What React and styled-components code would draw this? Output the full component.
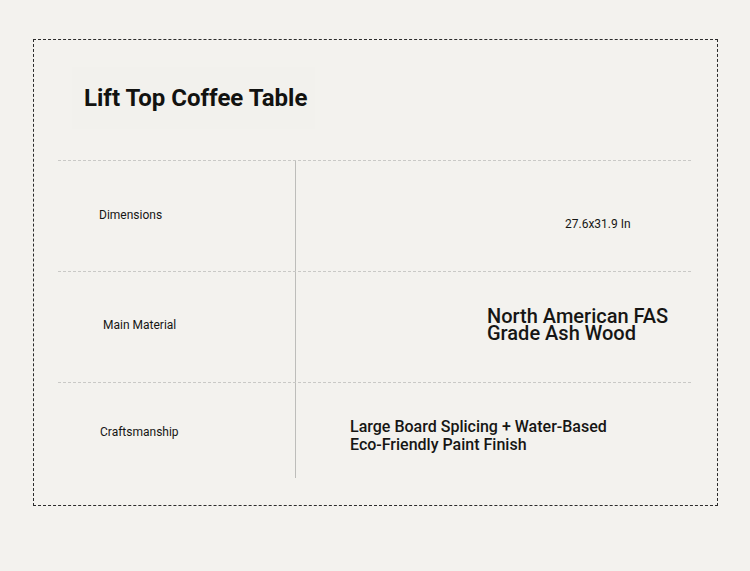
import React from 'react';
import styled, { createGlobalStyle } from 'styled-components';

const Global = createGlobalStyle`
  html, body {
    margin: 0;
    padding: 0;
    background: #f3f2ee;
  }
  body {
    font-family: Roboto, "Liberation Sans", sans-serif;
    color: #161616;
  }
`;

const specs = [
  { id: 1, label: 'Dimensions', value: '27.6x31.9 In', height: 111, labelPl: 41, labelDy: -1, valuePl: 269, valueDy: 8, size: 12, lh: 16, weight: 400 },
  { id: 2, label: 'Main Material', value: ['North American FAS', 'Grade Ash Wood'], height: 111, labelPl: 45, labelDy: -2, valuePl: 191, valueDy: -2, size: 20, lh: 17, weight: 500 },
  { id: 3, label: 'Craftsmanship', value: ['Large Board Splicing + Water-Based', 'Eco-Friendly Paint Finish'], height: 96, labelPl: 42, labelDy: 1, valuePl: 54, valueDy: 5, size: 16, lh: 18, weight: 500 },
];

const App = () => {
  return (
    <>
      <Global />
      <Card>
        <TitleWrap>
          <Title>Lift Top Coffee Table</Title>
        </TitleWrap>
        <Table>
          {specs.map(item => <SpecRow key={item.id} {...item} />)}
        </Table>
      </Card>
    </>
  );
};

const SpecRow = ({ label, value, height, labelPl, labelDy, valuePl, valueDy, size, lh, weight }) => {
  const lines = Array.isArray(value) ? value : [value];
  return (
    <Row $height={height}>
      <LabelCell $pl={labelPl} $dy={labelDy}>
        <Label>{label}</Label>
      </LabelCell>
      <ValueCell $pl={valuePl} $dy={valueDy}>
        <Value $size={size} $lh={lh} $weight={weight}>
          {lines.map((line, i) => <span key={i}>{line}</span>)}
        </Value>
      </ValueCell>
    </Row>
  );
};

const Card = styled.section`
  box-sizing: border-box;
  width: 685px;
  height: 467px;
  margin: 39px 0 0 33px;
  border: 1px dashed #2b2b2b;
`;

const TitleWrap = styled.div`
  display: flex;
  align-items: center;
  width: 243px;
  height: 62px;
  margin: 27px 0 0 38px;
  padding: 0 12px;
  box-sizing: border-box;
  background: rgba(0, 0, 0, 0.004);
`;

const Title = styled.h1`
  margin: 0;
  font-size: 24px;
  font-weight: 700;
  color: #121210;
  white-space: nowrap;
`;

const Table = styled.div`
  width: 633px;
  margin: 31px 0 0 24px;
`;

const Row = styled.div`
  box-sizing: border-box;
  display: grid;
  grid-template-columns: 238px 1fr;
  height: ${p => p.$height}px;
  border-top: 1px dashed #c9c9c6;
`;

const shift = dy => (dy >= 0 ? `padding-top: ${dy * 2}px;` : `padding-bottom: ${-dy * 2}px;`);

const LabelCell = styled.div`
  box-sizing: border-box;
  display: flex;
  align-items: center;
  padding-left: ${p => p.$pl}px;
  ${p => shift(p.$dy)}
  border-right: 1px solid #bdbdba;
`;

const Label = styled.span`
  font-size: 12px;
  font-weight: 400;
  color: #161614;
`;

const ValueCell = styled.div`
  box-sizing: border-box;
  display: flex;
  align-items: center;
  padding-left: ${p => p.$pl}px;
  ${p => shift(p.$dy)}
`;

const Value = styled.div`
  display: flex;
  flex-direction: column;
  font-size: ${p => p.$size}px;
  line-height: ${p => p.$lh}px;
  font-weight: ${p => p.$weight};
  color: #161614;
  white-space: nowrap;
`;

export default App;
